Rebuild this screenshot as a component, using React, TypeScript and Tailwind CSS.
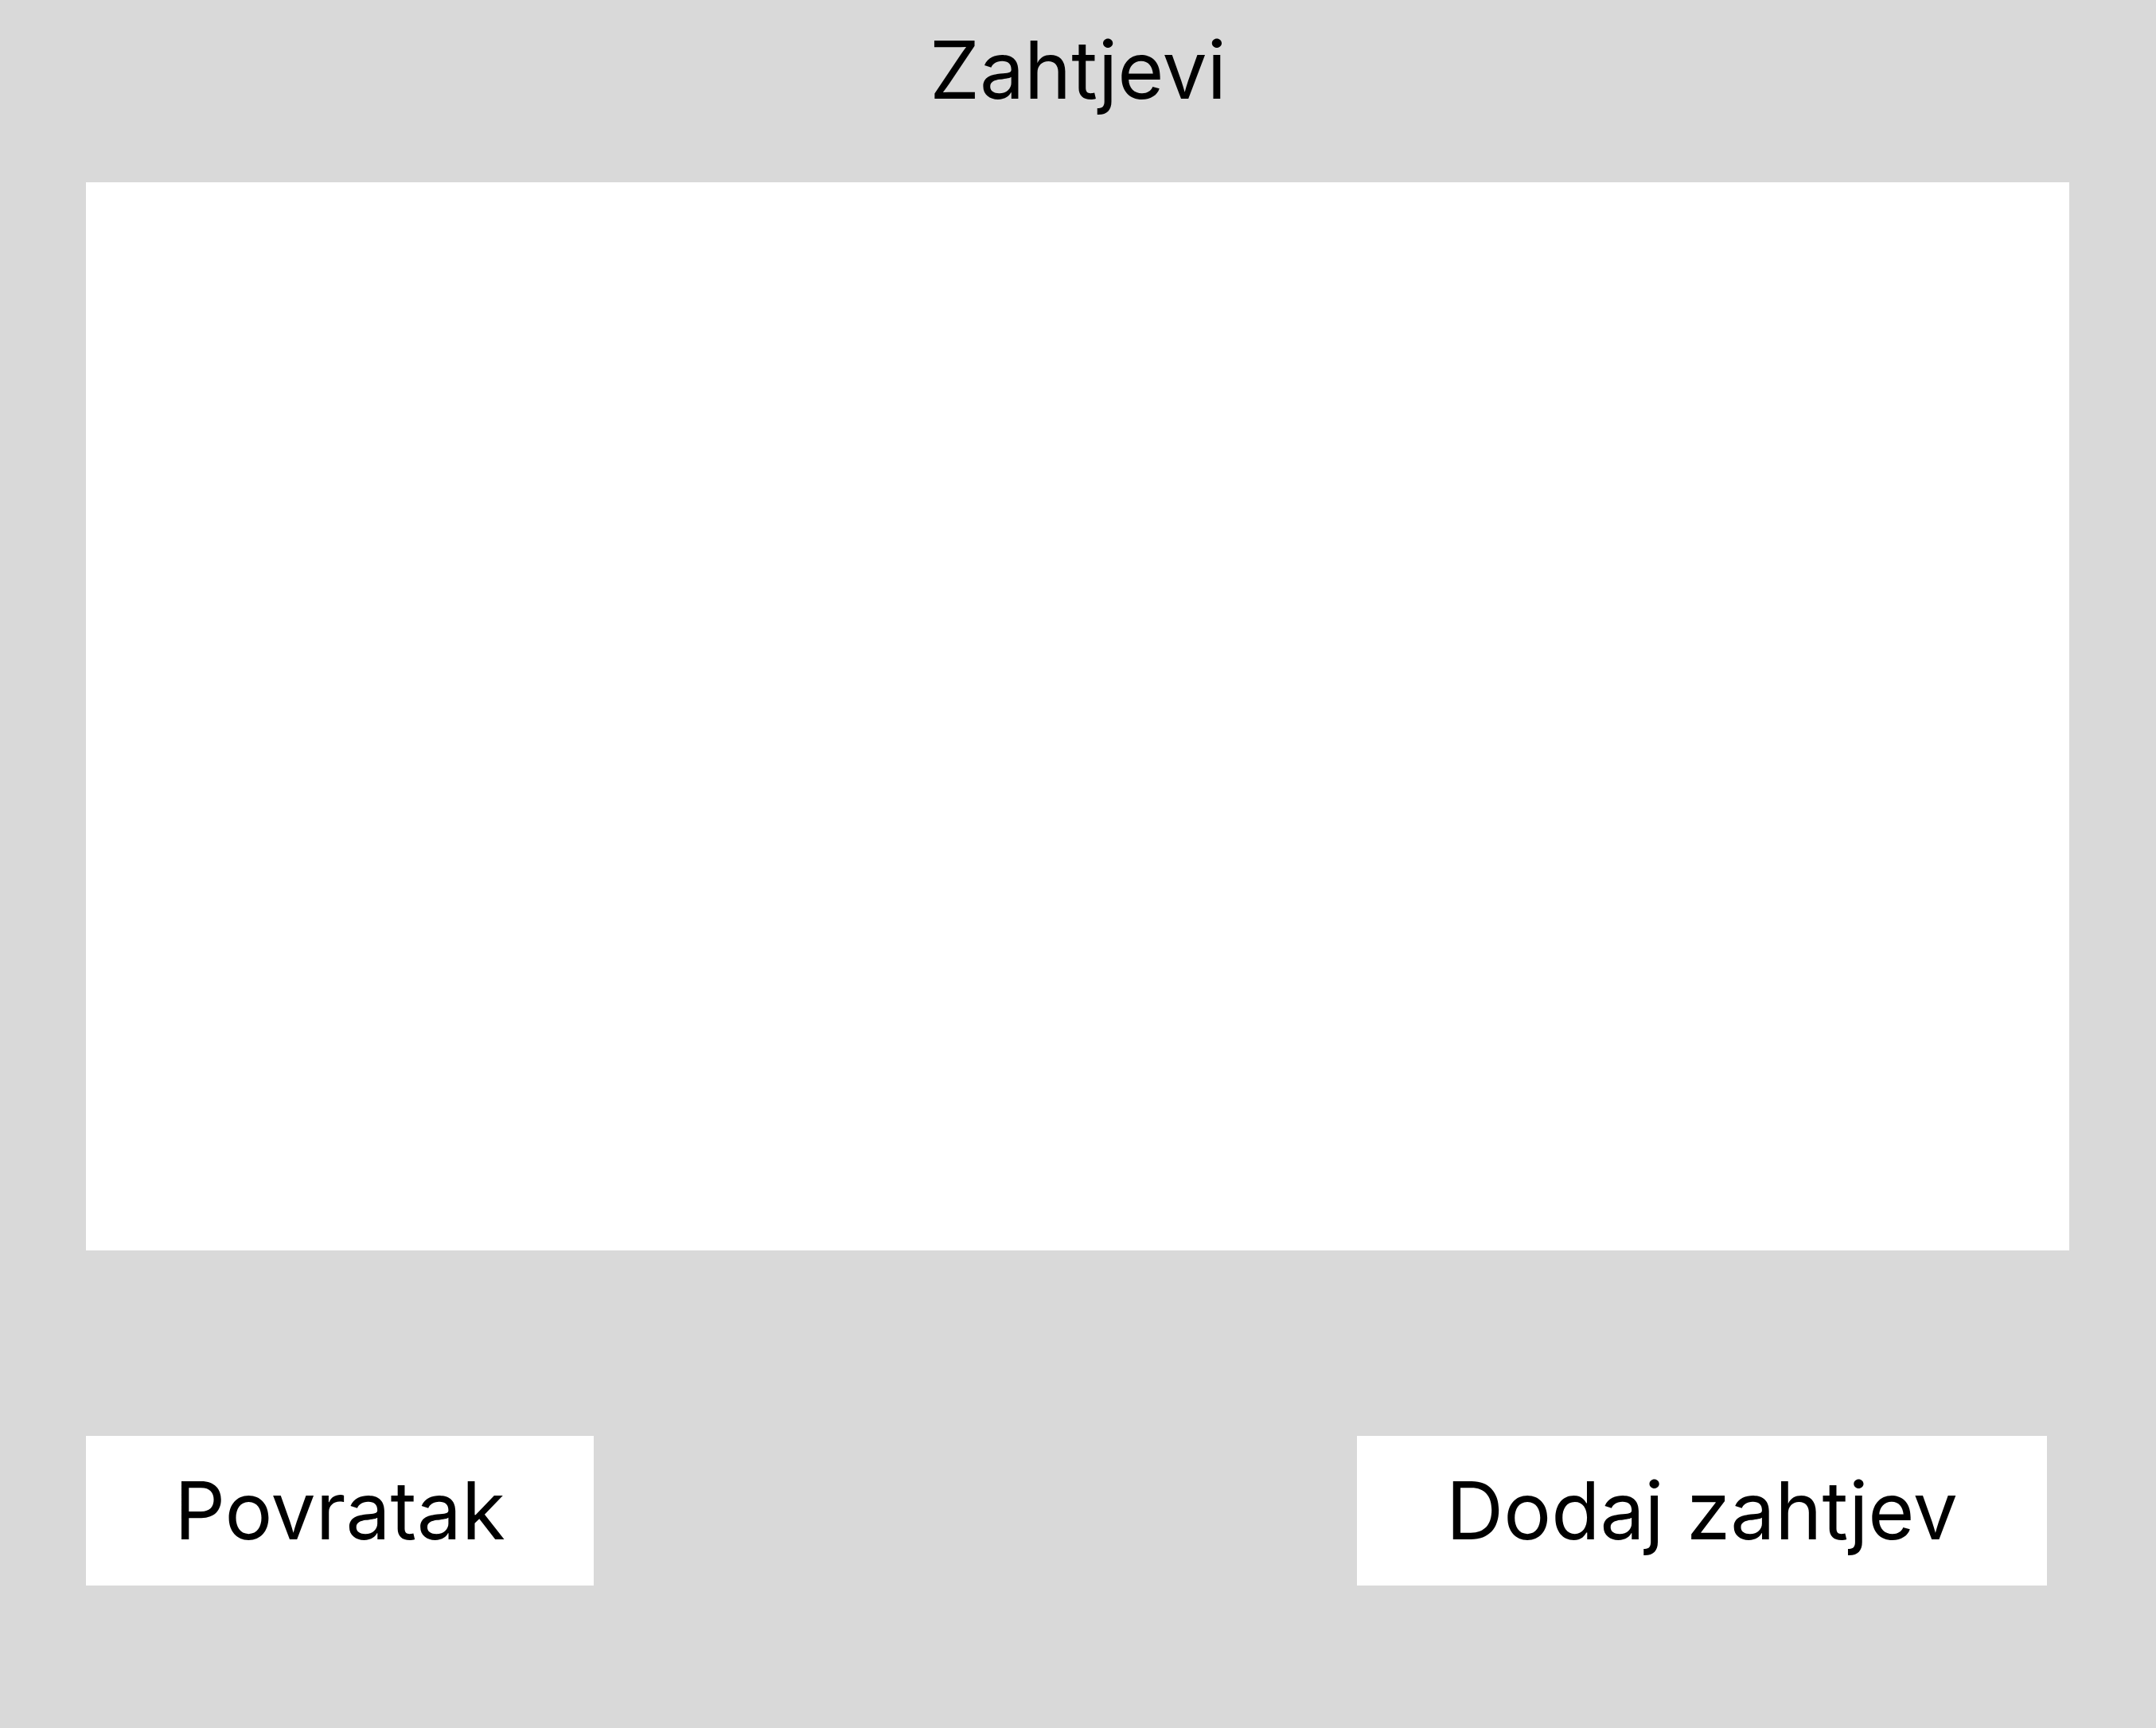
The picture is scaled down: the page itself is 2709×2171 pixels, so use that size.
export default function App() {
  return (
    <div className="w-[2709px] h-[2171px] bg-[#d9d9d9] text-black" style={{ fontFamily: "Inter, 'Liberation Sans', sans-serif" }}>
      <div className="h-[229px] pt-[38px] text-center text-[100px] leading-none">Zahtjevi</div>
      <div className="ml-[108px] w-[2492px] h-[1342px] bg-white" />
      <div className="mt-[233px] flex justify-between pl-[108px] pr-[137px]">
        <div className="w-[638px] h-[188px] bg-white flex items-center justify-center text-[100px] leading-none">Povratak</div>
        <div className="w-[867px] h-[188px] bg-white flex items-center justify-center text-[100px] leading-none">Dodaj zahtjev</div>
      </div>
    </div>
  );
}
